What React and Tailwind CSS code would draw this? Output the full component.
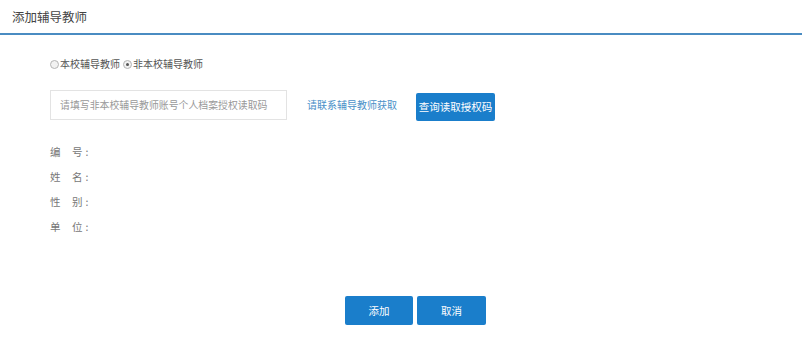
import React, { useState } from 'react';

const font = { fontFamily: '"Microsoft YaHei", "Noto Sans CJK SC", sans-serif' };

const Radio = ({ checked, onClick, label }) => (
  <label className="flex items-center cursor-pointer" onClick={onClick}>
    <span className="w-[9px] h-[9px] rounded-full border border-[#b5b5b5] bg-[#f2f2f2] flex items-center justify-center mr-[1px]">
      {checked && <span className="w-[3px] h-[3px] rounded-full bg-[#555]" />}
    </span>
    <span>{label}</span>
  </label>
);

const fields = [
  ['编', '号'],
  ['姓', '名'],
  ['性', '别'],
  ['单', '位'],
];

export default function App() {
  const [type, setType] = useState('outer');
  const [code, setCode] = useState('');

  return (
    <div className="w-[802px] h-[348px] bg-white text-[#333]" style={font}>
      <div className="h-[35px] border-b-2 border-[#4a8cc2] pl-[12px] pt-[9px] text-[12.5px] leading-[16px] text-[#444]">
        添加辅导教师
      </div>

      <div className="pl-[50px]">
        <div className="mt-[22px] flex items-center gap-[3px] text-[10px] leading-[14px] text-[#555]">
          <Radio checked={type === 'inner'} onClick={() => setType('inner')} label="本校辅导教师" />
          <Radio checked={type === 'outer'} onClick={() => setType('outer')} label="非本校辅导教师" />
        </div>

        <div className="mt-[17px] flex items-center">
          <input
            value={code}
            onChange={(e) => setCode(e.target.value)}
            placeholder="请填写非本校辅导教师账号个人档案授权读取码"
            className="w-[237px] h-[30px] border border-[#e3e3e3] px-[9px] text-[9.9px] text-[#333] placeholder:text-[#999] outline-none"
          />
          <a className="ml-[20px] text-[10px] text-[#4a90c8] cursor-pointer">请联系辅导教师获取</a>
          <button className="ml-[19px] mt-[5px] h-[28px] w-[79px] rounded-[2px] bg-[#1a7ecb] text-white text-[10.5px] whitespace-nowrap">
            查询读取授权码
          </button>
        </div>

        <div className="mt-[22px] flex flex-col gap-[8px] text-[10.5px] text-[#777]">
          {fields.map(([a, b]) => (
            <div key={a} className="h-[17px] leading-[17px] flex">
              <span className="w-[22px]">{a}</span>
              <span>{b}</span>
              <span className="ml-[3px]">:</span>
            </div>
          ))}
        </div>
      </div>

      <div className="mt-[61px] flex justify-center gap-[4px] pl-[29px]">
        <button className="w-[68px] h-[29px] rounded-[2px] bg-[#1a7ecb] text-white text-[10.5px]">添加</button>
        <button className="w-[69px] h-[29px] rounded-[2px] bg-[#1a7ecb] text-white text-[10.5px]">取消</button>
      </div>
    </div>
  );
}
